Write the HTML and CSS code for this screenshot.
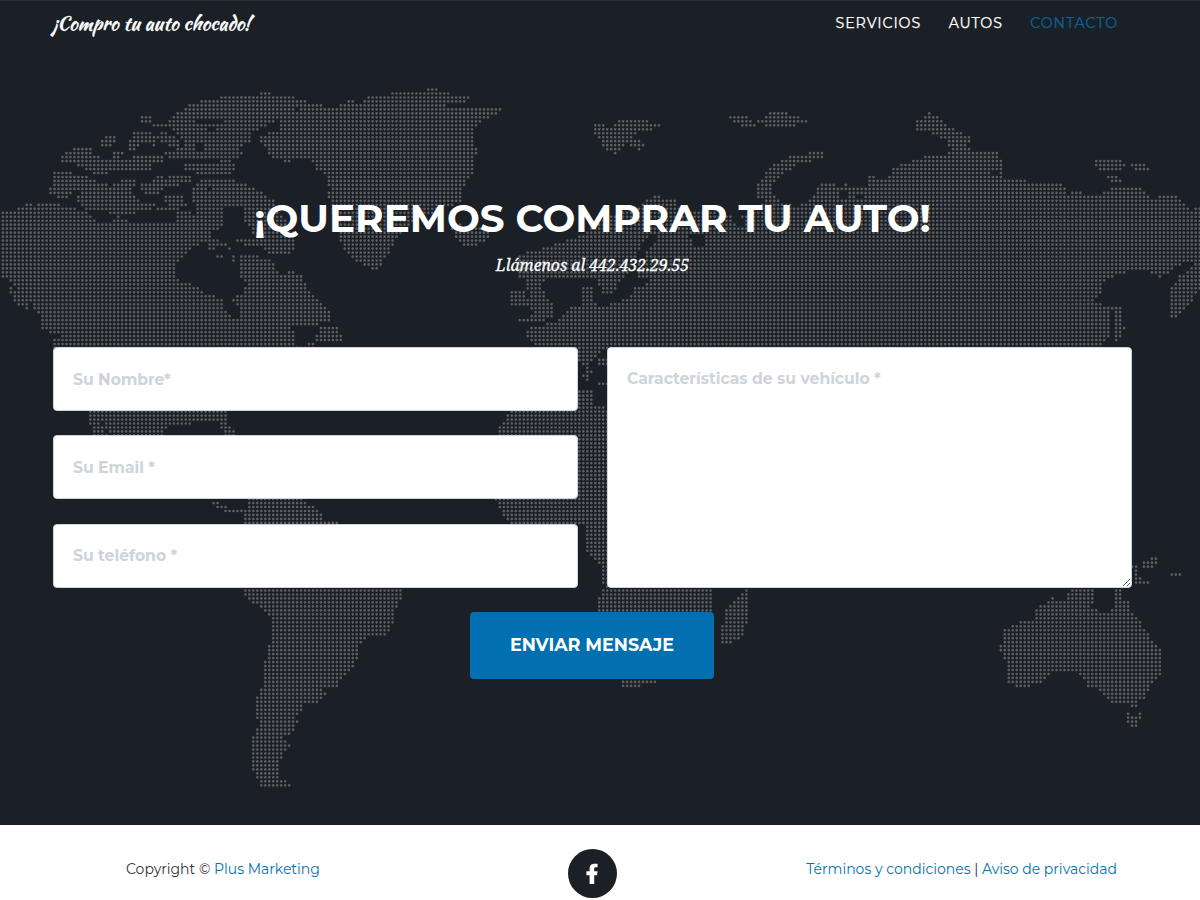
FILE: index.html
```html
<!DOCTYPE html>
<html lang="es">
<head>
<meta charset="utf-8">
<title>¡Compro tu auto chocado!</title>
<link rel="stylesheet" href="styles.css">
</head>
<body>
<section class="contact">
  <svg class="map" width="1200" height="825" viewBox="0 0 1200 825" aria-hidden="true"><path id="dots"/></svg>
  <header class="nav">
    <a class="brand">¡Compro tu auto chocado!</a>
    <nav class="links">
      <a class="link">SERVICIOS</a>
      <a class="link">AUTOS</a>
      <a class="link active">CONTACTO</a>
    </nav>
  </header>
  <div class="heading">
    <h2 class="title">¡QUEREMOS COMPRAR TU AUTO!</h2>
    <p class="subtitle">Llámenos al 442.432.29.55</p>
  </div>
  <form class="form">
    <div class="fields">
      <input class="control" placeholder="Su Nombre*">
      <input class="control" placeholder="Su Email *">
      <input class="control" placeholder="Su teléfono *">
    </div>
    <textarea class="control area" placeholder="Características de su vehículo *"></textarea>
    <button class="send" type="button">ENVIAR MENSAJE</button>
  </form>
</section>
<footer class="footer">
  <p class="copy">Copyright © <a>Plus Marketing</a></p>
  <a class="social"><svg width="49" height="49" viewBox="0 0 49 49"><path fill="#fff" d="M21.6 35V26.2H18.4V22.2H21.6V19.6C21.6 16.2 23.5 14.8 26.6 14.8H29.6V18.3H27.9C26.6 18.3 26.2 18.9 26.2 20V22.2H29.6L29 26.2H26.2V35Z"/></svg></a>
  <p class="legal"><a>Términos y condiciones</a> | <a>Aviso de privacidad</a></p>
</footer>
<script src="map.js"></script>
</body>
</html>
```
FILE: styles.css
```css
* { box-sizing: border-box; }
body { margin: 0; width: 1200px; height: 900px; overflow: hidden; background: #fff; font-family: Montserrat, Inter, "Open Sans", sans-serif; }
h2, p { margin: 0; }
.contact { position: relative; height: 825px; background: #1b1f26; border-top: 1px solid #2b2f36; }
.map { position: absolute; left: 0; top: -1px; }
#dots { fill: #5b5e62; }
.nav, .heading, .form { position: relative; width: 1185px; }
.nav { height: 43px; padding: 0 67px 0 52px; display: flex; align-items: center; justify-content: space-between; color: #fff; }
.brand { font: 400 19.5px "Kaushan Script", Lato, cursive; white-space: nowrap; -webkit-text-stroke: .3px #fff; }
.links { display: flex; gap: 27.6px; }
.link { font-size: 14.2px; letter-spacing: .9px; line-height: 20px; -webkit-text-stroke: .25px currentColor; }
.active { color: #06649a; }
.heading { padding-top: 149px; text-align: center; color: #fff; }
.title { font-size: 38.9px; line-height: 50px; font-weight: 700; white-space: nowrap; }
.subtitle { font: italic 15.75px/24px "Droid Serif", "Noto Serif", "Liberation Serif", serif; margin-top: 10px; -webkit-text-stroke: .3px #fff; }
.form { padding: 70px 53px 0; display: grid; grid-template-columns: 525px 525px; column-gap: 29px; row-gap: 24px; justify-items: center; }
.fields { display: flex; flex-direction: column; gap: 24.3px; width: 525px; }
.control { width: 525px; height: 64px; padding: 0 19px; border: 1px solid #ced4da; border-radius: 4px; background: #fff; font: 700 15.6px/24px Montserrat, Inter, sans-serif; outline: 0; }
.control::placeholder { color: #ced4da; opacity: 1; }
.area { height: 241px; padding: 19px; display: block; }
.send { grid-column: 1 / 3; width: 244px; height: 67px; margin-right: 2px; border: 0; border-radius: 4px; background: #026fb1; color: #fff; font: 700 17.5px/24px Montserrat, Inter, sans-serif; padding: 0 0 2px 1px; }
.footer { width: 1185px; height: 75px; padding: 24px 68px 0 126px; display: grid; grid-template-columns: 442px 49px 1fr; font-size: 14px; line-height: 40px; color: #333; white-space: nowrap; }
.footer a { color: #0374ad; }
.social { width: 49px; height: 49px; border-radius: 50%; background: #1b1f26; }
.social svg { display: block; }
.legal { text-align: right; }
```
FILE: map.js
```js
// Coastlines as flat x,y lists; every grid point that falls on land gets a dot.
const land = [
"0,210 15,210 18,206 27,205 30,202 35,207 40,203 48,203 53,206 56,203 60,206 70,206 80,211 90,214 93,220 105,218 115,215 122,220 140,222 158,222 175,222 178,212 185,210 195,214 200,206 212,204 227,208 229,213 220,218 226,228 210,232 204,243 192,248 182,258 173,265 173,277 195,287 207,295 222,298 223,310 232,319 239,318 239,308 232,300 245,292 247,285 240,275 240,256 250,254 258,256 268,260 275,266 277,276 285,276 293,270 302,278 306,290 315,298 325,305 330,313 330,320 320,324 288,325 294,332 295,345 315,345 315,349 55,349 55,340 65,334 50,327 41,325 41,315 30,302 20,290 0,274",
"10,286 28,300 30,312 18,304 10,292","38,324 55,328 66,336 54,334 40,328",
"88,411 228,411 228,423 235,436 225,436 218,422 200,420 190,424 167,425 163,436 113,436 104,424 98,420 106,436 94,436 90,420",
"320,325 335,326 342,335 342,344 333,342 314,340 318,332","306,343 315,340 315,346",
"185,110 190,104 208,100 228,96 258,96 260,92 271,92 272,96 292,96 300,100 307,101 300,107 290,112 285,120 270,122 258,130 250,133 252,142 245,142 240,148 242,156 225,160 205,158 165,157 168,150 188,148 183,140 175,130 165,126 170,118 178,112",
"180,162 215,163 225,158 236,163 233,173 203,174 182,170","140,115 149,115 149,122 140,122","152,123 161,123 161,127 152,127",
"106,136 118,135 115,142 108,149 101,148 102,143","133,132 145,131 155,136 157,146 145,144 138,141 136,150 129,150 130,142","157,136 165,131 180,140 180,147 163,144",
"62,155 75,147 93,147 92,152 85,155 95,155 110,161 115,152 122,152 120,158 130,161 130,170 100,171 110,174 95,174 80,166 62,162",
"133,156 163,154 163,162 150,164 150,170 133,170",
"54,171 70,171 70,176 85,175 95,182 113,186 125,180 137,180 137,186 130,190 140,202 155,204 150,209 135,213 120,214 85,210 78,200 80,192 75,191 68,197 58,197 50,192 55,180",
"141,184 150,184 155,178 162,176 168,184 160,192 152,196 140,190","170,176 193,176 190,184 170,186","165,196 178,193 188,205 175,210 150,212 168,205",
"193,188 200,180 230,180 243,184 258,190 272,200 280,215 296,235 295,247 290,252 278,256 265,252 262,246 235,244 237,239 260,240 248,225 244,215 240,205 225,208 195,206",
"204,234 214,239 230,246 230,249 218,247 208,250","216,254 224,257 216,257","232,253 236,253 236,262 232,262",
"260,142 262,135 280,130 283,118 290,115 305,105 340,106 350,100 362,106 370,96 395,93 425,91 427,87 437,87 440,92 468,97 465,102 430,104 460,107 500,108 498,114 480,122 474,130 473,140 477,152 472,158 472,173 466,182 460,192 465,200 445,208 430,214 410,224 395,238 388,252 380,265 375,269 355,262 343,245 335,225 333,210 328,193 331,188 325,172 315,168 313,160 300,158 285,162 270,156 268,148",
"450,222 488,230 488,240 470,249 458,240",
"592,130 595,124 612,126 620,120 645,120 662,125 650,130 635,132 633,140 622,148 615,154 605,150 603,140","632,139 646,144 641,150 632,147",
"726,116 745,116 754,126 743,127","758,121 770,113 785,112 808,121 790,127 770,127","757,195 758,185 765,175 775,165 795,155 824,151 824,158 800,163 780,175 769,188 780,201 765,202",
"916,121 928,115 930,112 938,118 945,124 960,132 971,137 966,145 973,152 952,150 948,143 944,138 930,133 916,130","1094,165 1098,159 1122,159 1124,165 1118,171 1100,170","1130,162 1140,162 1149,170 1134,169","1106,175 1117,175 1122,182 1110,181",
"517,258 530,250 545,248 570,240 585,235 600,220 640,205 655,196 675,199 680,210 720,213 750,213 760,205 780,203 800,207 813,196 822,185 835,184 838,191 845,184 860,190 868,185 868,176 890,180 892,168 915,160 930,156 945,156 952,148 966,146 975,153 995,152 1002,160 1003,178 1020,180 1040,183 1062,181 1066,196 1075,192 1100,195 1110,189 1140,188 1150,198 1175,194 1190,210 1200,206 1200,262 1180,264 1165,275 1160,277 1148,270 1118,273 1105,280 1100,292 1092,300 1107,306 1109,325 1108,335 1100,349 541,349 525,337 525,330 545,325 560,320 570,307 582,304 582,288 591,288 590,300 600,306 618,303 632,296 637,282 636,270 640,262 660,238 650,233 640,243 635,262 618,282 612,292 603,296 598,278 580,280 545,278 530,283 519,276",
"1170,290 1180,276 1200,262 1200,290 1182,310 1174,320 1170,308","1113,305 1120,305 1124,330 1117,344 1114,330",
"530,270 547,274 540,285 545,295 555,305 552,315 545,321 520,323 517,321 535,315 528,305 533,295 525,284","513,290 526,290 527,300 520,308 510,308",
"578,347 603,347 600,355 592,357 588,365 592,372 588,380 581,378 587,370 578,358","599,356 607,356 607,367 600,366","600,381 607,381 607,387 600,387","580,388 594,392 594,404 607,409 607,525 578,525 578,409",
"512,411 580,411 580,436 497,436 500,426","494,498 580,498 580,524 510,524","588,520 607,520 607,590 603,580 600,562 588,552","605,588 713,588 713,612 597,612 597,602",
"208,499 218,502 230,510 248,508 248,499 302,499 318,510 324,520 338,521 338,525 245,525 243,514 230,514 215,507",
"243,588 250,602 262,608 271,618 273,640 268,650 265,665 264,685 257,697 257,712 260,725 253,740 252,768 260,783 264,788 291,788 290,783 280,780 278,762 283,752 291,748 290,743 283,738 290,733 298,722 293,715 302,713 302,705 318,702 327,694 320,686 335,688 345,675 353,665 357,658 358,645 370,635 380,637 389,632 394,615 397,605 402,592 402,588",
"749,588 749,612 745,625 740,640 723,645 723,625 728,607 740,598","624,680 655,680 655,684 624,688",
"1004,629 1013,625 1025,621 1034,620 1036,607 1043,606 1053,598 1060,601 1066,600 1068,592 1073,590 1093,590 1092,600 1090,607 1100,611 1108,613 1114,608 1114,590 1121,590 1122,602 1129,602 1130,612 1140,622 1147,634 1156,645 1161,652 1161,672 1153,680 1147,693 1144,700 1136,702 1135,707 1130,707 1130,702 1116,703 1106,699 1100,690 1087,687 1086,680 1078,673 1060,671 1045,676 1040,683 1020,688 1008,684 1008,665 1001,651",
"1126,712 1132,716 1141,712 1140,720 1135,727 1127,724","1133,566 1137,566 1137,577 1149,582 1147,586 1134,582","1141,562 1150,562 1153,557 1158,557 1158,566 1142,569","1172,573 1181,573 1181,577 1172,577"
];
const water = ["197,118 225,119 223,124 197,122","207,127 216,127 216,132 207,132","196,144 203,144 203,150 196,150","175,165 182,165 182,170 175,170","93,214 115,215 120,220 95,222","130,216 175,216 175,222 133,222","208,186 213,186 213,191 208,191","225,208 244,208 244,238 222,242 208,235 226,226",
"733,215 741,215 746,225 735,225 731,220","688,235 705,235 703,245 696,247","838,192 846,192 846,200 838,200","992,170 997,170 997,175 992,175","857,193 862,193 862,199 857,199","640,277 648,277 648,284 637,286"];
const parse = s => s.split(" ").map(p => p.split(",").map(Number));
const inside = (poly, x, y) => {
  let hit = false;
  for (let i = 0, j = poly.length - 1; i < poly.length; j = i++) {
    const [ax, ay] = poly[i], [bx, by] = poly[j];
    if ((ay > y) !== (by > y) && x < (bx - ax) * (y - ay) / (by - ay) + ax) hit = !hit;
  }
  return hit;
};
const shores = land.map(parse), seas = water.map(parse);
const step = 3.976;
let d = "";
for (let y = 93.5 - 2 * step; y < 790; y += step)
  for (let x = 261.3 - 66 * step; x < 1202; x += step)
    if (shores.some(p => inside(p, x, y) || inside(p, x + 1, y) || inside(p, x - 1, y)) && !seas.some(p => inside(p, x, y)))
      d += `M${(x - 1.35).toFixed(2)} ${y.toFixed(2)}a1.35 1.35 0 1 0 2.7 0a1.35 1.35 0 1 0 -2.7 0`;
document.getElementById("dots").setAttribute("d", d);
```
